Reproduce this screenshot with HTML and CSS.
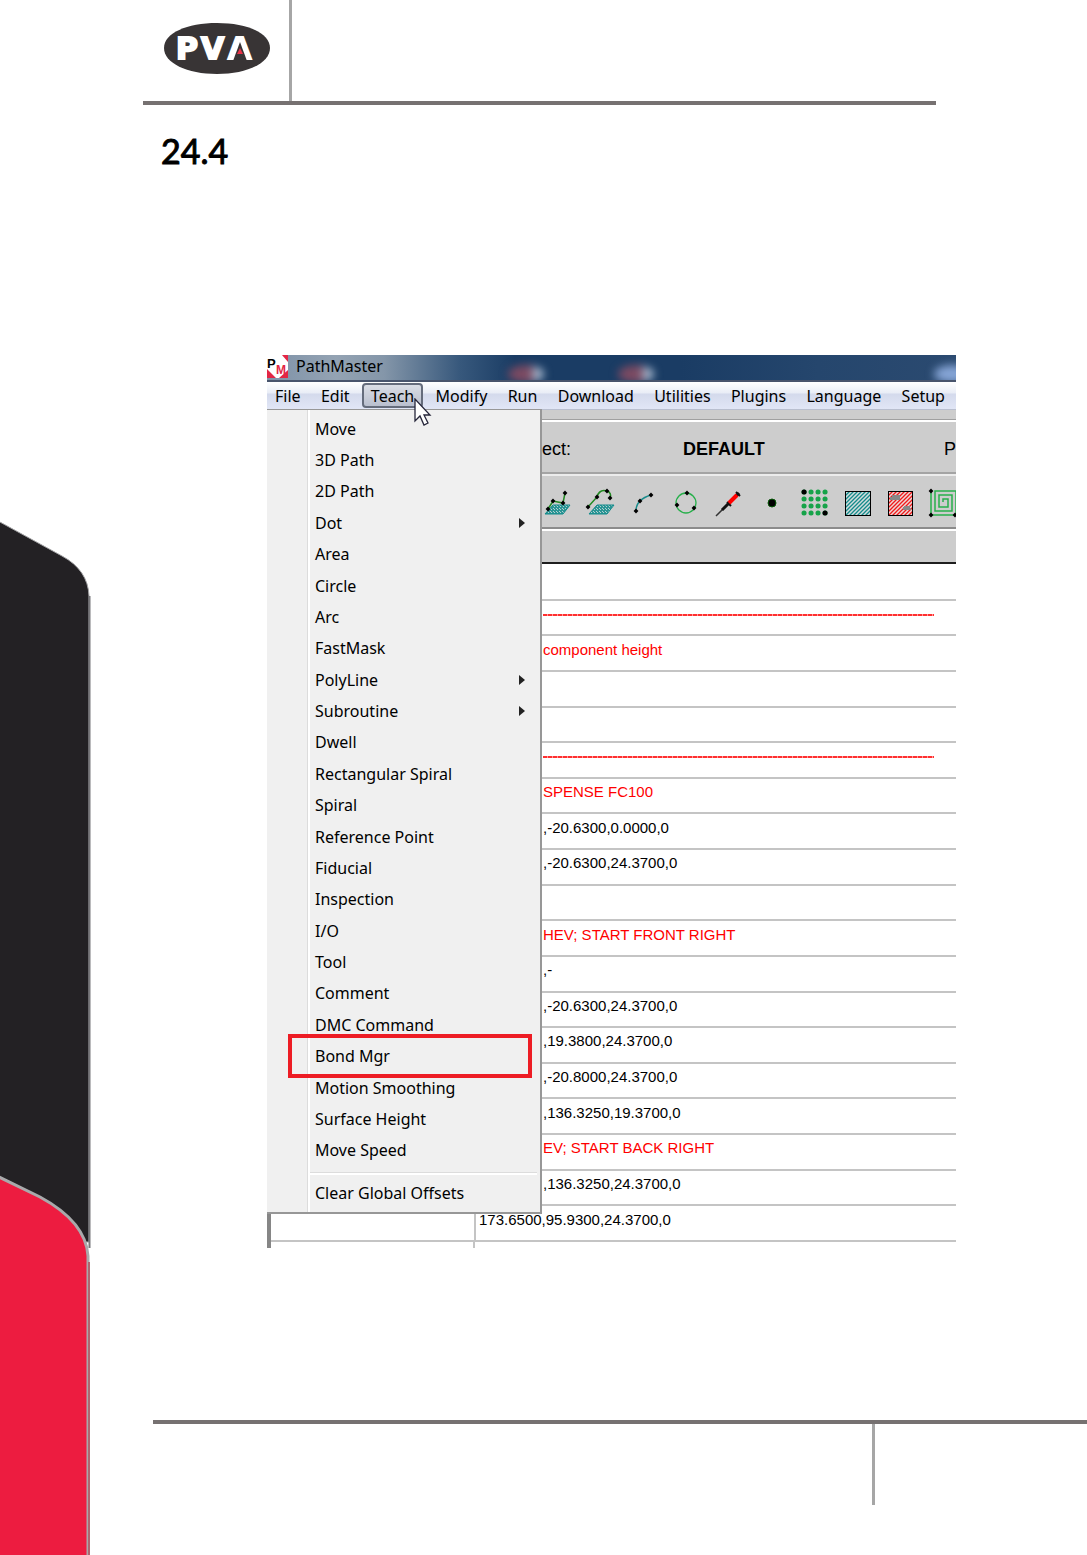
FILE: index.html
```html
<!DOCTYPE html>
<html lang="en">
<head>
    <meta charset="UTF-8">
    <meta name="viewport" content="width=device-width, initial-scale=1.0">
    <title>PathMaster - Bond Mgr</title>
    <link rel="stylesheet" href="styles.css">
</head>
<body>
    <div class="page">
        <aside class="side">
            <svg width="91" height="1035" viewBox="0 0 91 1035" aria-hidden="true">
                <path d="M-2 1 L62 36 Q88 50 89 76 V722 H-2Z" fill="#232124" stroke="#a3a3a5"/>
                <path d="M89.500 76 V728" stroke="#77777a" stroke-width="2"/>
                <path d="M-3 656 L40 677 Q86 702 88 736 V1037 H-3Z" fill="#ed1c40" stroke="#a9a9ab" stroke-width="3"/>
                <path d="M89 742 V1035" stroke="#b06570" stroke-width="2"/>
            </svg>
        </aside>

        <div class="sheet">
            <header class="page-header">
                <div class="logo">
                    <svg width="108" height="54" viewBox="0 0 108 54" role="img" aria-label="PVA">
                        <path d="M1 27 C1 12 24 2 54 2 S107 12 107 27 S84 53 54 53 S1 42 1 27Z" fill="#383435"/>
                        <text class="logo-text" x="13 38 65" y="38">PVA</text>
                        <path d="M77 21 L70 40 H84Z" fill="#383435"/>
                        <path d="M77 27 L74 33 H80Z" fill="#e93247"/>
                    </svg>
                </div>
            </header>

            <main class="content">
                <h1>24.4</h1>

                <div class="window">
                    <div class="title-bar">
                        <svg width="21" height="23" viewBox="0 0 21 23" aria-hidden="true">
                            <path d="M0 0 H17 L21 5 V23 H0Z" fill="#fff"/>
                            <path d="M0 14 L9 23 H0Z M15 0 H21 V7Z M21 15 V23 H12Z" fill="#e32645"/>
                            <text class="app-p" x="0" y="13">P</text>
                            <text class="app-m" x="9" y="19">M</text>
                        </svg>
                        <span>PathMaster</span>
                        <i class="glow glow-one"></i>
                        <i class="glow glow-two"></i>
                        <i class="glow glow-end"></i>
                    </div>

                    <nav class="menu-bar">
                        <button>File</button>
                        <button>Edit</button>
                        <button class="active">Teach</button>
                        <button>Modify</button>
                        <button>Run</button>
                        <button>Download</button>
                        <button>Utilities</button>
                        <button>Plugins</button>
                        <button>Language</button>
                        <button>Setup</button>
                    </nav>

                    <div class="strip"></div>
                    <div class="project">
                        <span class="project-label">ect:</span>
                        <strong>DEFAULT</strong>
                        <span class="project-end">P</span>
                    </div>

                    <div class="toolbar">
                        <button aria-label="3D path">
                            <svg width="43" height="30" viewBox="0 0 43 30">
                                <path d="M17 17 H34 L27 26 H9Z" fill="url(#mesh)" stroke="#138b8b"/>
                                <path d="M12 21 L17 13 L27 15 L29 5" fill="none" stroke="#218a21" stroke-width="1.500"/>
                                <path d="M12 20 l1 1 -1 1 -1 -1Z M17 12 l1 1 -1 1 -1 -1Z M27 14 l1 1 -1 1 -1 -1Z M29 4 l1 1 -1 1 -1 -1Z" stroke="#000" stroke-width="2"/>
                            </svg>
                        </button>
                        <button aria-label="3D arc">
                            <svg width="43" height="30" viewBox="0 0 43 30">
                                <path d="M18 17 H35 L28 26 H10Z" fill="url(#mesh)" stroke="#138b8b"/>
                                <path d="M9 19 L18 9 Q20 1 28 3 Q33 5 31 10" fill="none" stroke="#218a21" stroke-width="1.500"/>
                                <path d="M9 18 l1 1 -1 1 -1 -1Z M18 8 l1 1 -1 1 -1 -1Z M28 2 l1 1 -1 1 -1 -1Z M31 9 l1 1 -1 1 -1 -1Z" stroke="#000" stroke-width="2"/>
                            </svg>
                        </button>
                        <button aria-label="Arc">
                            <svg width="43" height="30" viewBox="0 0 43 30">
                                <path d="M14 23 Q14 17 18 13 T29 7" fill="none" stroke="#188b8b" stroke-width="1.500"/>
                                <path d="M14 22 l1 1 -1 1 -1 -1Z M18 12 l1 1 -1 1 -1 -1Z M29 6 l1 1 -1 1 -1 -1Z" stroke="#000" stroke-width="2"/>
                            </svg>
                        </button>
                        <button aria-label="Circle">
                            <svg width="43" height="30" viewBox="0 0 43 30">
                                <circle cx="21" cy="15" r="10" fill="none" stroke="#27b04b" stroke-width="1.300"/>
                                <path d="M22 4 l1 1 -1 1 -1 -1Z M12 16 l1 1 -1 1 -1 -1Z M29 19 l1 1 -1 1 -1 -1Z" stroke="#000" stroke-width="2"/>
                            </svg>
                        </button>
                        <button aria-label="Dispense">
                            <svg width="43" height="30" viewBox="0 0 43 30">
                                <path d="M8 28 L18 18" stroke="#333" stroke-width="1.500"/>
                                <path d="M14 22 L31 5" stroke="#111" stroke-width="3"/>
                                <path d="M19 14 L23 18 M28 4 L32 8" stroke="#111" stroke-width="2"/>
                                <path d="M21 15 L29 7" stroke="#f00" stroke-width="4"/>
                            </svg>
                        </button>
                        <button aria-label="Dot">
                            <svg width="43" height="30" viewBox="0 0 43 30">
                                <circle cx="21" cy="15" r="4" stroke="#075907"/>
                            </svg>
                        </button>
                        <button aria-label="Dot array">
                            <svg width="43" height="30" viewBox="0 0 43 30">
                                <path class="dots" d="M10 4h.1 M17 4h.1 M24 4h.1 M31 4h.1 M10 11h.1 M17 11h.1 M24 11h.1 M31 11h.1 M10 18h.1 M17 18h.1 M24 18h.1 M31 18h.1 M10 25h.1 M17 25h.1 M24 25h.1 M31 25h.1"/>
                                <path class="dots dots-black" d="M10 4h.1 M31 25h.1"/>
                            </svg>
                        </button>
                        <button aria-label="Area">
                            <svg width="43" height="30" viewBox="0 0 43 30">
                                <rect x="8.500" y="3.500" width="25" height="24" fill="url(#hatch-teal)" stroke="#000"/>
                            </svg>
                        </button>
                        <button aria-label="FastMask">
                            <svg width="43" height="30" viewBox="0 0 43 30">
                                <rect x="8.500" y="3.500" width="24" height="24" fill="url(#hatch-red)" stroke="#000"/>
                                <path d="M12 7 H20 V12 H10 V9 H12Z M24 18 H30 V20 H31 V22 H23 V19 H24Z" fill="#888"/>
                            </svg>
                        </button>
                        <button aria-label="Rectangular spiral">
                            <svg width="43" height="30" viewBox="0 0 43 30">
                                <path d="M8 3 V27 H33 V3 H12 V23 H29 V7 H16 V19 H25 V11 H20 V14" fill="none" stroke="#27b04b" stroke-width="1.500"/>
                                <path d="M8 2 l1 1 -1 1 -1 -1Z M8 26 l1 1 -1 1 -1 -1Z M32 26 l1 1 -1 1 -1 -1Z" stroke="#000" stroke-width="2"/>
                            </svg>
                        </button>
                        <svg class="defs" width="0" height="0" aria-hidden="true">
                            <defs>
                                <pattern id="mesh" width="3" height="3" patternUnits="userSpaceOnUse">
                                    <rect width="3" height="3" fill="#2a9595"/>
                                    <path d="M0 0h1v1H0Z M2 2h1v1H2Z" fill="#b5cfcf"/>
                                </pattern>
                                <pattern id="hatch-teal" width="4" height="4" patternUnits="userSpaceOnUse">
                                    <rect width="4" height="4" fill="#d4dddd"/>
                                    <path d="M-1 1 L1 -1 M0 4 L4 0 M3 5 L5 3" stroke="#138b8b" stroke-width="1.300"/>
                                </pattern>
                                <pattern id="hatch-red" width="4" height="4" patternUnits="userSpaceOnUse">
                                    <rect width="4" height="4" fill="#eed8d8"/>
                                    <path d="M-1 1 L1 -1 M0 4 L4 0 M3 5 L5 3" stroke="#f01a1a" stroke-width="1.300"/>
                                </pattern>
                            </defs>
                        </svg>
                    </div>
                    <div class="grid-head"></div>

                    <div class="grid-wrap">
                        <table class="program">
                            <tbody>
                                <tr><td></td><td></td></tr>
                                <tr><td></td><td class="remark"><div class="dashes"></div></td></tr>
                                <tr><td></td><td class="remark">component height</td></tr>
                                <tr><td></td><td></td></tr>
                                <tr><td></td><td></td></tr>
                                <tr><td></td><td class="remark"><div class="dashes"></div></td></tr>
                                <tr><td></td><td class="remark">SPENSE FC100</td></tr>
                                <tr><td></td><td>,-20.6300,0.0000,0</td></tr>
                                <tr><td></td><td>,-20.6300,24.3700,0</td></tr>
                                <tr><td></td><td></td></tr>
                                <tr><td></td><td class="remark">HEV; START FRONT RIGHT</td></tr>
                                <tr><td></td><td>,-</td></tr>
                                <tr><td></td><td>,-20.6300,24.3700,0</td></tr>
                                <tr><td></td><td>,19.3800,24.3700,0</td></tr>
                                <tr><td></td><td>,-20.8000,24.3700,0</td></tr>
                                <tr><td></td><td>,136.3250,19.3700,0</td></tr>
                                <tr><td></td><td class="remark">EV; START BACK RIGHT</td></tr>
                                <tr><td></td><td>,136.3250,24.3700,0</td></tr>
                                <tr><td></td><td class="full">173.6500,95.9300,24.3700,0</td></tr>
                            </tbody>
                        </table>
                        <div class="next-row"></div>
                    </div>

                    <div class="menu">
                        <div class="menu-items">
                            <button>Move</button>
                            <button>3D Path</button>
                            <button>2D Path</button>
                            <button class="has-sub">Dot</button>
                            <button>Area</button>
                            <button>Circle</button>
                            <button>Arc</button>
                            <button>FastMask</button>
                            <button class="has-sub">PolyLine</button>
                            <button class="has-sub">Subroutine</button>
                            <button>Dwell</button>
                            <button>Rectangular Spiral</button>
                            <button>Spiral</button>
                            <button>Reference Point</button>
                            <button>Fiducial</button>
                            <button>Inspection</button>
                            <button>I/O</button>
                            <button>Tool</button>
                            <button>Comment</button>
                            <button>DMC Command</button>
                            <button class="marked">Bond Mgr</button>
                            <button>Motion Smoothing</button>
                            <button>Surface Height</button>
                            <button>Move Speed</button>
                        </div>
                        <hr>
                        <button class="clear">Clear Global Offsets</button>
                    </div>

                    <svg class="cursor" width="18" height="29" viewBox="0 0 18 29" aria-hidden="true">
                        <path d="M1 1 V23 L6 18 L10 27 L14 25 L10 17 H16Z" fill="#fff" stroke="#26263a" stroke-width="1.300"/>
                    </svg>
                </div>
            </main>

            <footer class="page-footer">
                <div class="footer-cell"></div>
            </footer>
        </div>
    </div>
</body>
</html>
```
FILE: styles.css
```css
* {
    margin: 0;
    padding: 0;
    box-sizing: border-box;
}

body {
    font-family: "Noto Sans", sans-serif;
    background: #fff;
    color: #000;
}

button {
    border: none;
    background: none;
    font: inherit;
    color: inherit;
}

svg {
    display: block;
}

.page {
    display: grid;
    grid-template-columns: 91px 1fr;
    overflow: hidden;
}

.side {
    align-self: end;
}

.sheet {
    min-width: 0;
}

/* header */
.page-header {
    margin: 0 151px 0 52px;
    border-bottom: 4px solid #767171;
}

.logo {
    width: 149px;
    height: 101px;
    padding: 21px 0 0 20px;
    border-right: 3px solid #a6a6a6;
}

.logo-text {
    font-family: "DejaVu Sans", sans-serif;
    font-weight: bold;
    font-size: 30px;
    fill: #fff;
    stroke: #fff;
    stroke-width: 2px;
}

h1 {
    padding: 22px 0 0 70px;
    font-family: Lato, sans-serif;
    font-size: 34px;
    font-weight: 400;
    line-height: 48px;
    -webkit-text-stroke: 1px #000;
}

/* application window */
.window {
    position: relative;
    margin: 180px 131px 0 176px;
    overflow: hidden;
    background: #cdcdcd;
}

.title-bar {
    position: relative;
    display: flex;
    gap: 8px;
    height: 27px;
    overflow: hidden;
    border-bottom: 2px solid #48546c;
    background: linear-gradient(90deg, #7e92a8 0, #94a3b3 10%, #8496a9 17%, #37587c 28%, #1a3c64 36%, #1a3c64 60%, #25466d 80%, #2b4a70 100%);
    font-size: 16px;
    line-height: 22px;
}

.app-p,
.app-m {
    font-family: "Liberation Sans", sans-serif;
    font-weight: bold;
    font-size: 13px;
}

.app-m {
    font-size: 12px;
    fill: #e32645;
}

.glow {
    position: absolute;
    top: 10px;
    width: 36px;
    height: 18px;
    border-radius: 50%;
    background: linear-gradient(90deg, #7c4a62 60%, #a9bdd2 80%);
    filter: blur(4px);
}

.glow-one {
    left: 35%;
}

.glow-two {
    left: 51%;
}

.glow-end {
    right: -14px;
    background: #86a5d6;
}

.menu-bar {
    display: flex;
    justify-content: space-between;
    height: 28px;
    padding: 1px 3px 1px 0;
    border-bottom: 1px solid #b9bfcf;
    background: linear-gradient(#fff, #e9edf6 40%, #d4daec 45%, #e1e6f6);
    font-size: 16px;
    line-height: 24px;
}

.menu-bar button {
    padding: 0 8px;
}

.menu-bar .active {
    padding: 0 7px;
    border: 2px solid #656c7c;
    border-radius: 4px;
    background: linear-gradient(#dadde5, #b9bfce);
    line-height: 20px;
}

.strip {
    height: 12px;
    border-bottom: 2px solid #fff;
    background: linear-gradient(#cdcdcd 9px, #a0a0a0 9px);
}

.project {
    display: flex;
    align-items: center;
    height: 52px;
    padding: 4px 0 0 275px;
    border-bottom: 2px solid #a4a4a4;
    font-family: "Liberation Sans", sans-serif;
    font-size: 18px;
}

.project strong {
    margin-left: 111px;
}

.project-label {
    width: 30px;
}

.project-end {
    margin: 0 0 0 auto;
}

.toolbar {
    display: flex;
    height: 55px;
    padding: 12px 0 0 269px;
    border-top: 2px solid #ececec;
    border-bottom: 2px solid #8c8c8c;
}

.toolbar button {
    flex: none;
    height: 30px;
}

.defs {
    position: absolute;
}

.dots {
    fill: none;
    stroke: #16a349;
    stroke-width: 5px;
    stroke-linecap: round;
}

.dots-black {
    stroke: #000;
}

.grid-head {
    height: 35px;
    border-top: 2px solid #fff;
    border-bottom: 2px solid #1e1e1e;
}

/* program listing */
.grid-wrap {
    border-left: 4px solid #868686;
    background: #fff;
}

.program {
    width: 100%;
    height: 678px;
    border-collapse: collapse;
    table-layout: fixed;
    font-family: "Liberation Sans", sans-serif;
    font-size: 15px;
    line-height: 18px;
}

.program tr {
    height: 35px;
}

.program td {
    padding: 0 0 7px 67px;
    border-bottom: 2px solid #c4c4c4;
    white-space: nowrap;
    overflow: hidden;
}

.program td:first-child {
    width: 204px;
    padding: 0;
    border-right: 2px solid #c4c4c4;
}

.program .full {
    padding-left: 3px;
}

.program .remark {
    color: #f00;
}

.dashes {
    height: 2px;
    margin: 2px 22px 0 0;
    background: repeating-linear-gradient(90deg, #ff3030 0, #ff3030 4px, #ff9696 4px, #ff9696 5px);
}

.next-row {
    width: 204px;
    height: 6px;
    border-right: 2px solid #c4c4c4;
}

/* Teach menu */
.menu {
    position: absolute;
    top: 54px;
    left: 0;
    width: 275px;
    padding: 3px 2px 4px 0;
    border: solid #979797;
    border-width: 1px 2px 2px 0;
    background: linear-gradient(90deg, #f0f0f0 40px, #dcdcdc 40px, #dcdcdc 41px, #fff 41px, #fff 43px, #f0f0f0 43px);
    font-size: 16px;
    line-height: 22px;
}

.menu button {
    padding-left: 48px;
    text-align: left;
}

.menu-items {
    display: grid;
    grid-auto-rows: 1fr;
    height: 753px;
}

.menu .has-sub {
    display: flex;
    align-items: center;
    justify-content: space-between;
    padding-right: 13px;
}

.has-sub::after {
    content: "";
    border: solid transparent;
    border-width: 5px 0 5px 6px;
    border-left-color: #222;
}

.menu .marked {
    position: relative;
}

.marked::before {
    content: "";
    position: absolute;
    top: -7px;
    right: 6px;
    bottom: -6px;
    left: 21px;
    border: 4px solid #ed1c24;
}

hr {
    height: 3px;
    margin: 6px 1px 3px 43px;
    border: none;
    border-top: 1px solid #dcdcdc;
    background: #fff;
}

.menu .clear {
    width: 100%;
    height: 30px;
}

.cursor {
    position: absolute;
    top: 43px;
    left: 147px;
}

/* footer */
.page-footer {
    margin: 172px 0 0 62px;
    padding-bottom: 50px;
    border-top: 4px solid #767171;
}

.footer-cell {
    height: 81px;
    margin-right: 212px;
    border-right: 3px solid #a6a6a6;
}
```
